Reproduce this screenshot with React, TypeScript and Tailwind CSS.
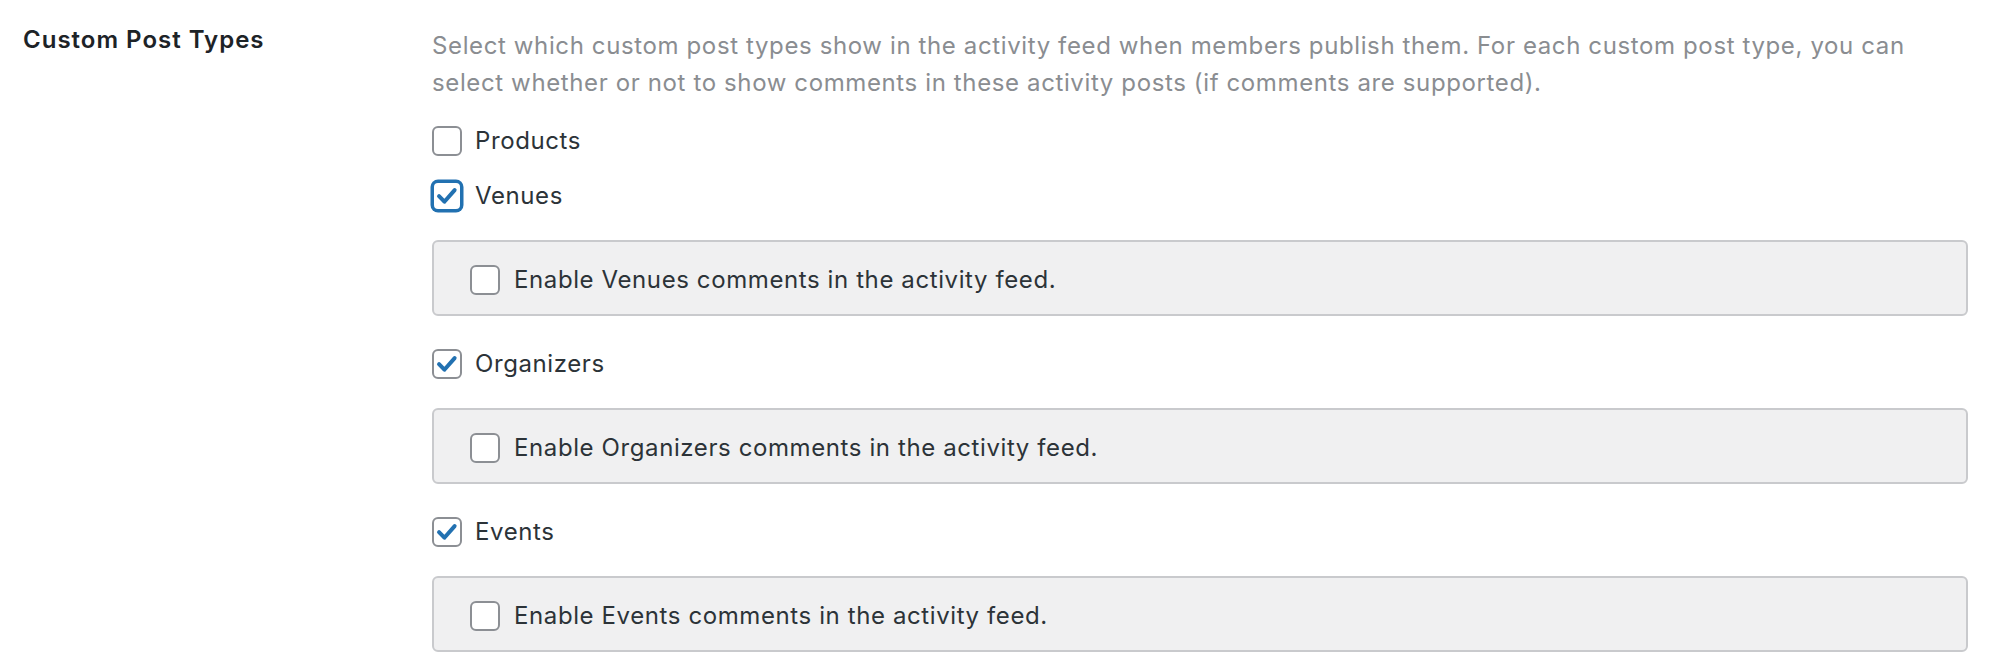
import React from "react";

type BoxProps = { checked?: boolean; focused?: boolean };

function CheckBox({ checked = false, focused = false }: BoxProps) {
  const border = focused
    ? "border-[2px] border-[#2271b1] shadow-[0_0_0_1.5px_#2271b1]"
    : "border-[2px] border-[#8c8f94]";
  return (
    <span
      className={`relative inline-flex h-[30px] w-[30px] shrink-0 items-center justify-center rounded-[6px] bg-white ${border}`}
    >
      {checked && (
        <svg viewBox="0 0 30 30" className="absolute inset-0 h-full w-full">
          <path
            d="M5.8 15.2 L12 21.6 L23.8 8.2"
            fill="none"
            stroke="#2271b1"
            strokeWidth="4.6"
            strokeLinecap="round"
            strokeLinejoin="round"
          />
        </svg>
      )}
    </span>
  );
}

function OptionRow({ label, checked, focused }: { label: string; checked?: boolean; focused?: boolean }) {
  return (
    <label className="flex h-[29px] items-center gap-[13px] text-[24px] tracking-[0.6px] text-[#2c3338]">
      <CheckBox checked={checked} focused={focused} />
      <span className="leading-[29px]">{label}</span>
    </label>
  );
}

function CommentsPanel({ name }: { name: string }) {
  return (
    <div className="mt-[30px] flex h-[76px] items-center rounded-[6px] border-[2px] border-[#c9cacd] bg-[#f0f0f1] pl-[36px] pt-[3px]">
      <label className="flex items-center gap-[14px] text-[24px] tracking-[0.6px] text-[#2c3338]">
        <CheckBox />
        <span className="leading-[29px]">Enable {name} comments in the activity feed.</span>
      </label>
    </div>
  );
}

const types = [
  { name: "Products", checked: false, focused: false, panel: false },
  { name: "Venues", checked: true, focused: true, panel: true },
  { name: "Organizers", checked: true, focused: false, panel: true },
  { name: "Events", checked: true, focused: false, panel: true },
];

export default function App() {
  return (
    <div
      className="flex h-[671px] w-[2000px] bg-white"
      style={{ fontFamily: "Inter, 'Noto Sans', sans-serif" }}
    >
      <div className="w-[432px] shrink-0 pl-[23px] pt-[24px]">
        <h2 className="text-[24px] font-semibold leading-[31px] tracking-[1px] text-[#1d2327]">Custom Post Types</h2>
      </div>
      <div className="w-[1536px] shrink-0 pt-[28px]">
        <p className="text-[24px] leading-[36.5px] tracking-[0.62px] text-[#8a8d91]">
          Select which custom post types show in the activity feed when members publish them. For each custom post type, you can select whether or not to show comments in these activity posts (if comments are supported).
        </p>
        <div className="mt-[25px] flex flex-col">
          {types.map((t, i) => {
            const prevHasPanel = i > 0 && types[i - 1].panel;
            const mt = i === 0 ? "" : prevHasPanel ? "mt-[33px]" : "mt-[26px]";
            return (
              <div key={t.name} className={mt}>
                <OptionRow label={t.name} checked={t.checked} focused={t.focused} />
                {t.panel && <CommentsPanel name={t.name} />}
              </div>
            );
          })}
        </div>
      </div>
    </div>
  );
}
